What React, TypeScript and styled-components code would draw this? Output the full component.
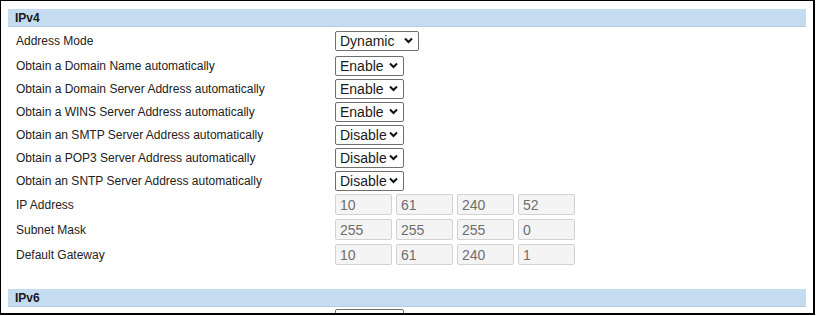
import React from 'react';
import styled, { createGlobalStyle } from 'styled-components';

const GlobalStyle = createGlobalStyle`
	body {
		margin: 0;
		background: #fff;
		font-family: 'Liberation Sans', Arial, sans-serif;
		color: #222;
	}
`;

const Frame = styled.div`
	box-sizing: border-box;
	width: 815px;
	height: 315px;
	border: 1px solid #000;
	border-right-width: 2px;
	border-bottom-width: 2px;
	padding: 8px 0 0 7px;
	overflow: hidden;
	background: #fff;
`;

const Section = styled.section`
	width: 798px;
`;

const SectionBar = styled.div`
	box-sizing: border-box;
	height: 18px;
	padding-left: 7px;
	background: #c5dbf0;
	border-bottom: 1px solid #b7cde3;
	font-size: 12px;
	font-weight: bold;
	line-height: 18px;
	color: #1a1a1a;
`;

const Row = styled.div<{ $h: number }>`
	display: grid;
	grid-template-columns: 319px 1fr;
	align-items: center;
	height: ${(p) => p.$h}px;
	padding-left: 8px;
`;

const Label = styled.div`
	font-size: 12px;
	color: #222;
`;

const SelectBox = styled.div<{ $w: number }>`
	box-sizing: border-box;
	display: flex;
	align-items: center;
	justify-content: space-between;
	width: ${(p) => p.$w}px;
	height: 20px;
	padding: 0 5px 0 4px;
	border: 1px solid #6f6f6f;
	border-radius: 2px;
	background: #fff;
	font-family: 'Liberation Sans', Arial, sans-serif;
	font-size: 14px;
	color: #1a1a1a;
`;

const Octets = styled.div`
	display: flex;
	gap: 4px;
`;

const Octet = styled.input`
	box-sizing: border-box;
	width: 57px;
	height: 21px;
	padding: 0 4px;
	border: 1px solid #d2d2d2;
	border-radius: 2px;
	background: #f4f4f4;
	font-family: 'Liberation Sans', Arial, sans-serif;
	font-size: 14px;
	color: #6e6e6e;
`;

const Spacer = styled.div`
	height: 22px;
`;

const Chevron = () => (
	<svg width="9" height="7" viewBox="0 0 9 7">
		<path d="M1 1.5 L4.5 5 L8 1.5" fill="none" stroke="#111" strokeWidth="2" />
	</svg>
);

const Select = ({ value, w }: { value: string; w: number }) => (
	<SelectBox $w={w}>
		<span>{value}</span>
		<Chevron />
	</SelectBox>
);

const selects: [string, string][] = [
	['Obtain a Domain Name automatically', 'Enable'],
	['Obtain a Domain Server Address automatically', 'Enable'],
	['Obtain a WINS Server Address automatically', 'Enable'],
	['Obtain an SMTP Server Address automatically', 'Disable'],
	['Obtain a POP3 Server Address automatically', 'Disable'],
	['Obtain an SNTP Server Address automatically', 'Disable'],
];

const addresses: [string, string[]][] = [
	['IP Address', ['10', '61', '240', '52']],
	['Subnet Mask', ['255', '255', '255', '0']],
	['Default Gateway', ['10', '61', '240', '1']],
];

export default function App() {
	return (
		<>
			<GlobalStyle />
			<Frame>
				<Section>
					<SectionBar>IPv4</SectionBar>
					<Row $h={27}>
						<Label>Address Mode</Label>
						<Select value="Dynamic" w={84} />
					</Row>
					{selects.map(([label, value]) => (
						<Row $h={23} key={label}>
							<Label>{label}</Label>
							<Select value={value} w={69} />
						</Row>
					))}
					{addresses.map(([label, parts]) => (
						<Row $h={25} key={label}>
							<Label>{label}</Label>
							<Octets>
								{parts.map((v, i) => (
									<Octet key={i} value={v} disabled readOnly />
								))}
							</Octets>
						</Row>
					))}
					<Spacer />
				</Section>
				<Section>
					<SectionBar>IPv6</SectionBar>
					<Row $h={23}>
						<div />
						<SelectBox $w={69} />
					</Row>
				</Section>
			</Frame>
		</>
	);
}
